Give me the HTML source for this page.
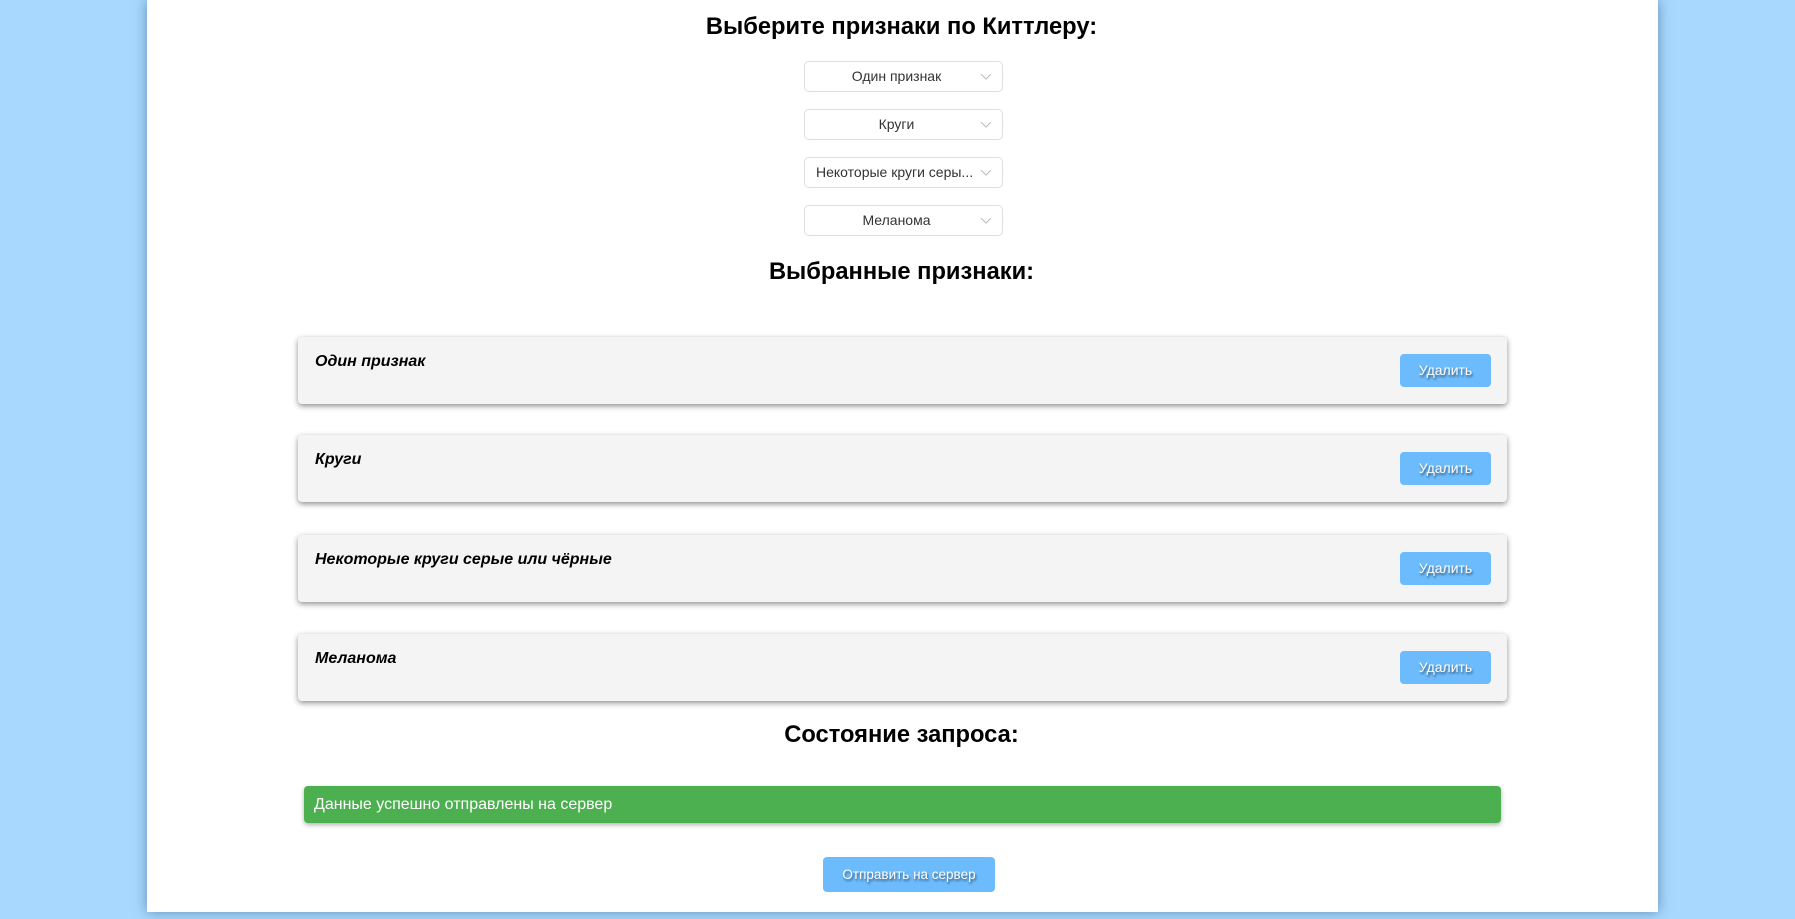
<!DOCTYPE html>
<html><head><meta charset="utf-8"><style>
body{margin:0;width:1795px;height:919px;background:#a8d8fe;overflow:hidden;font-family:"Liberation Sans","DejaVu Sans",sans-serif;position:relative}
.panel{position:absolute;left:147px;top:0;width:1511px;height:912px;background:#fff;box-shadow:0 0 12px rgba(40,80,120,.55)}
h2{position:absolute;left:4px;width:1795px;margin:0;text-align:center;font-size:23.7px;font-weight:bold;color:#000;line-height:30px}
.sel{position:absolute;left:804px;width:197px;height:29px;border:1px solid #dedede;border-radius:5px;background:#fff;font-size:14px;color:#333;line-height:29px;text-align:center;box-sizing:content-box}
.sel span{display:inline-block;margin-right:14px}
.sel svg{position:absolute;right:10px;top:11px}
.card{position:absolute;left:298px;width:1209px;height:67px;background:#f4f4f4;border-radius:4px;box-shadow:0 2px 6px rgba(0,0,0,.45)}
.card i{position:absolute;left:17px;top:16px;font-size:16px;font-weight:bold;font-style:italic;color:#000}
.btn{position:absolute;background:#6cbcfd;color:#fff;border-radius:4px;font-size:14px;text-align:center;text-shadow:1px 2px 2px rgba(0,0,0,.55)}
.card .btn{left:1102px;top:17px;width:91px;height:33px;line-height:33px}
.green{position:absolute;left:304px;top:786px;width:1197px;height:37px;background:#4caf50;border-radius:4px;box-shadow:0 2px 5px rgba(0,0,0,.3);color:#fff;font-size:16px;line-height:37px;padding-left:10px;box-sizing:border-box}
</style></head><body>
<div class="panel"></div>
<h2 style="top:12px">Выберите признаки по Киттлеру:</h2>
<div class="sel" style="top:61px"><span>Один признак</span><svg width="12" height="8"><path d="M1 1L6 6L11 1" fill="none" stroke="#bbb" stroke-width="1"/></svg></div>
<div class="sel" style="top:109px"><span>Круги</span><svg width="12" height="8"><path d="M1 1L6 6L11 1" fill="none" stroke="#bbb" stroke-width="1"/></svg></div>
<div class="sel" style="top:157px;text-align:left"><span style="margin-left:11px">Некоторые круги серы...</span><svg width="12" height="8"><path d="M1 1L6 6L11 1" fill="none" stroke="#bbb" stroke-width="1"/></svg></div>
<div class="sel" style="top:205px"><span>Меланома</span><svg width="12" height="8"><path d="M1 1L6 6L11 1" fill="none" stroke="#bbb" stroke-width="1"/></svg></div>
<h2 style="top:257px">Выбранные признаки:</h2>
<div class="card" style="top:337px"><i>Один признак</i><div class="btn">Удалить</div></div>
<div class="card" style="top:435px"><i>Круги</i><div class="btn">Удалить</div></div>
<div class="card" style="top:535px"><i>Некоторые круги серые или чёрные</i><div class="btn">Удалить</div></div>
<div class="card" style="top:634px"><i>Меланома</i><div class="btn">Удалить</div></div>
<h2 style="top:720px">Состояние запроса:</h2>
<div class="green">Данные успешно отправлены на сервер</div>
<div class="btn" style="left:823px;top:857px;width:172px;height:35px;line-height:35px;font-size:13.5px">Отправить на сервер</div>
</body></html>
